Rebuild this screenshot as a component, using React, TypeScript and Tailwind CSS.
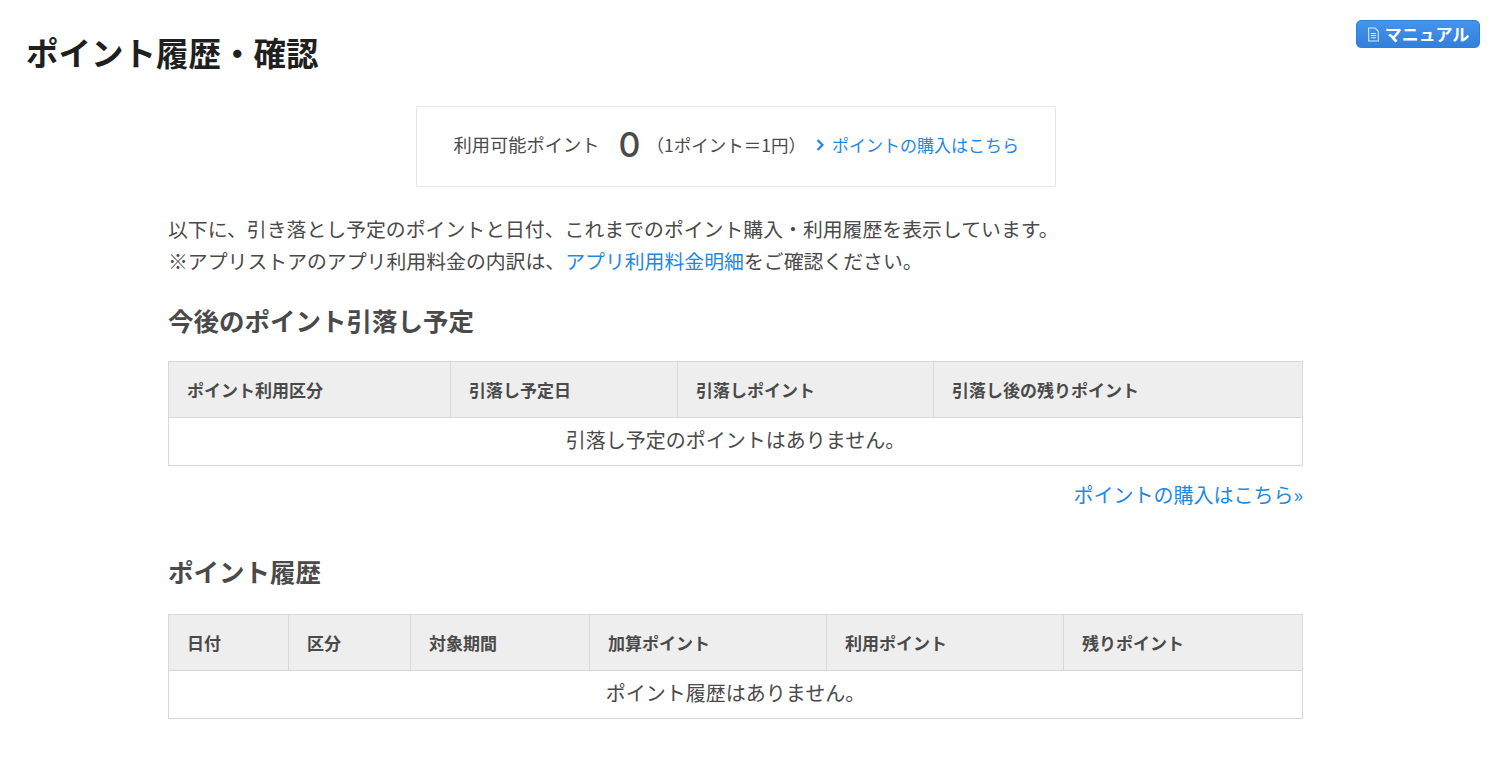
function Table({ cols, empty }: { cols: [string, string][]; empty: string }) {
  return (
    <table className="w-full table-fixed border-collapse border border-[#d8d8d8]">
      <thead>
        <tr>
          {cols.map(([label, width]) => (
            <th key={label} className={`${width} h-[56px] border border-[#d8d8d8] bg-[#eeeeee] pl-[18px] text-left text-[17px] font-bold text-[#4a4a4a]`}>
              {label}
            </th>
          ))}
        </tr>
      </thead>
      <tbody>
        <tr>
          <td colSpan={cols.length} className="h-[48px] pb-[4px] text-center text-[20px] text-[#4a4a4a]">
            {empty}
          </td>
        </tr>
      </tbody>
    </table>
  );
}

export default function App() {
  return (
    <div className="relative min-h-[776px] bg-white font-['Noto_Sans_CJK_JP','Noto_Sans',sans-serif] text-[#4a4a4a]">
      <a className="absolute right-[14px] top-[20px] flex h-[28px] w-[124px] items-center justify-center gap-[5px] rounded-[5px] border border-[#2f7fd6] bg-gradient-to-b from-[#4494ec] to-[#337fdc] text-[17px] font-bold text-white">
        <svg width="13" height="15" viewBox="0 0 12 14" fill="none" stroke="#dbe9fb" strokeWidth="1">
          <path d="M1.5 1h6l3 3v9h-9z" />
          <path d="M3.5 6h5M3.5 8h5M3.5 10h5" />
        </svg>
        マニュアル
      </a>
      <h1 className="pl-[26px] pt-[29px] text-[32.5px] font-bold leading-[46px] text-[#1f1f1f]">ポイント履歴・確認</h1>
      <div className="ml-[168px] w-[1135px]">
        <div className="mx-auto mt-[31px] flex h-[81px] w-[640px] items-center border border-[#e8e8e8] pb-[3px] pl-[37px]">
          <span className="text-[18.25px]">利用可能ポイント</span>
          <span className="ml-[19px] font-['Inter',sans-serif] text-[34px] font-medium leading-none">0</span>
          <span className="ml-[6px] text-[17.5px]">（1ポイント＝1円）</span>
          <a className="ml-[10px] flex items-center gap-[7px] text-[17px] text-[#1e88e5]">
            <svg width="9" height="14" viewBox="0 0 9 14" fill="none" stroke="#1e88e5" strokeWidth="2.2">
              <path d="M1.5 2l5 5-5 5" />
            </svg>
            ポイントの購入はこちら
          </a>
        </div>
        <p className="mt-[26px] text-[19.86px] leading-[32px]">
          以下に、引き落とし予定のポイントと日付、これまでのポイント購入・利用履歴を表示しています。
          <br />
          ※アプリストアのアプリ利用料金の内訳は、<a className="text-[#1e88e5]">アプリ利用料金明細</a>をご確認ください。
        </p>
        <h2 className="mt-[24px] mb-[22px] text-[25.5px] font-bold leading-[38px]">今後のポイント引落し予定</h2>
        <Table
          cols={[
            ['ポイント利用区分', 'w-[282px]'],
            ['引落し予定日', 'w-[227px]'],
            ['引落しポイント', 'w-[256px]'],
            ['引落し後の残りポイント', 'w-auto'],
          ]}
          empty="引落し予定のポイントはありません。"
        />
        <p className="mt-[15px] text-right text-[20px] leading-[28px] text-[#1e88e5]">ポイントの購入はこちら»</p>
        <h2 className="mt-[43px] mb-[24px] text-[25.5px] font-bold leading-[38px]">ポイント履歴</h2>
        <Table
          cols={[
            ['日付', 'w-[120px]'],
            ['区分', 'w-[122px]'],
            ['対象期間', 'w-[179px]'],
            ['加算ポイント', 'w-[237px]'],
            ['利用ポイント', 'w-[237px]'],
            ['残りポイント', 'w-auto'],
          ]}
          empty="ポイント履歴はありません。"
        />
      </div>
    </div>
  );
}
